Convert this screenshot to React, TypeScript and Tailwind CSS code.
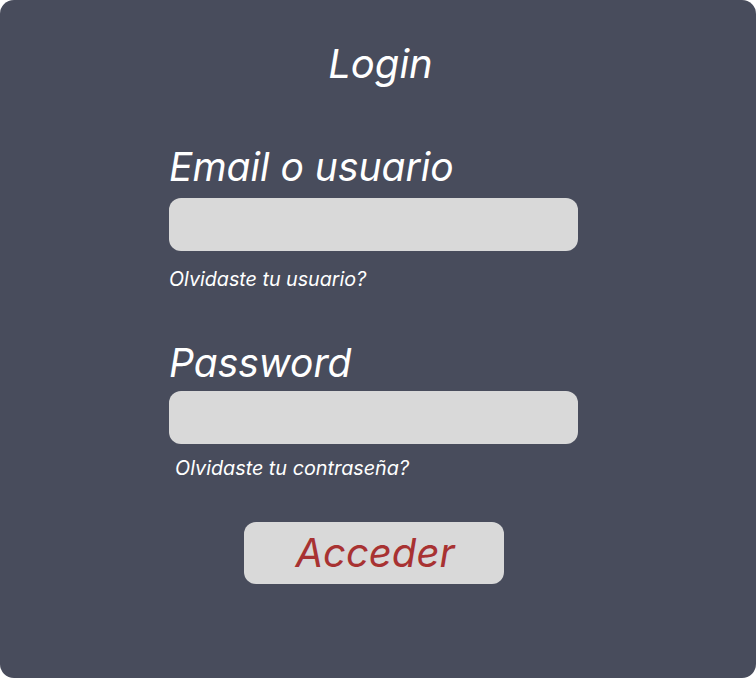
export default function App() {
  return (
    <div className="w-[756px] h-[678px] bg-white">
      <div
        className="w-[756px] h-[678px] rounded-[14px] bg-[#484c5c] text-white italic flex flex-col"
        style={{ fontFamily: 'Inter, "Noto Sans", sans-serif' }}
      >
        <h1 className="pt-[40px] pl-[5px] text-center text-[40px] leading-[48px] font-normal">Login</h1>

        <form className="ml-[169px] w-[409px] flex flex-col" onSubmit={(e) => e.preventDefault()}>
          <label className="mt-[55px] text-[39px] leading-[48px]">Email o usuario</label>
          <input className="mt-[7px] h-[53px] w-full rounded-[12px] bg-[#d9d9d9] outline-none px-4 text-black not-italic" />
          <a className="mt-[16px] text-[19.7px] leading-[24px] cursor-pointer">Olvidaste tu usuario?</a>

          <label className="mt-[48px] text-[39px] leading-[48px]">Password</label>
          <input
            type="password"
            className="mt-[4px] h-[53px] w-full rounded-[12px] bg-[#d9d9d9] outline-none px-4 text-black not-italic"
          />
          <a className="mt-[12px] pl-[6px] text-[19.8px] leading-[24px] cursor-pointer">Olvidaste tu contraseña?</a>

          <button
            type="submit"
            className="mt-[42px] self-center w-[260px] h-[62px] pl-[3px] rounded-[12px] bg-[#d9d9d9] text-[#a83232] text-[40px] leading-[48px] italic cursor-pointer"
          >
            Acceder
          </button>
        </form>
      </div>
    </div>
  );
}
